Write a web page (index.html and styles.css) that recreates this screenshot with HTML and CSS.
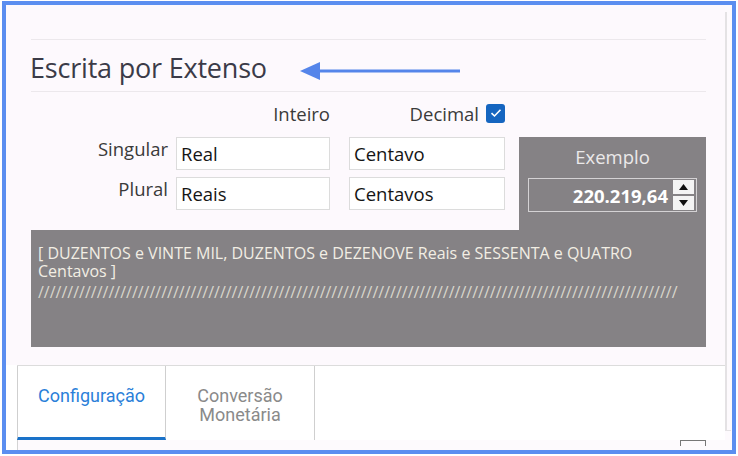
FILE: index.html
```html
<!DOCTYPE html>
<html lang="pt">
<head>
<meta charset="utf-8">
<link rel="stylesheet" href="styles.css">
</head>
<body>
<div class="frame">
  <div class="inner">
    <div class="content">
      <section class="top">
        <div class="rule first"></div>
        <div class="title-row">
          <h1 class="title">Escrita por Extenso</h1>
          <svg class="arrow" width="162" height="20" viewBox="0 0 162 20">
            <line x1="14" y1="10" x2="160" y2="10" stroke="#5585ea" stroke-width="3.2"/>
            <polygon points="0,10 20,1 20,19" fill="#5585ea"/>
          </svg>
        </div>
        <div class="rule"></div>
        <div class="form-grid">
          <div class="head head-int">Inteiro</div>
          <div class="head head-dec">Decimal
            <span class="check">
              <svg width="12" height="10" viewBox="0 0 12 10"><path d="M1.5 5.2 L4.5 8 L10.5 1.8" fill="none" stroke="#fff" stroke-width="1.6"/></svg>
            </span>
          </div>
          <div class="label r1">Singular</div>
          <div class="field r1 c-int">Real</div>
          <div class="field r1 c-dec">Centavo</div>
          <div class="label r2">Plural</div>
          <div class="field r2 c-int">Reais</div>
          <div class="field r2 c-dec">Centavos</div>
          <div class="example">
            <div class="example-title">Exemplo</div>
            <div class="spin">
              <span class="spin-value">220.219,64</span>
              <span class="spin-btns">
                <span class="spin-btn"><svg width="9" height="6" viewBox="0 0 9 6"><polygon points="0,6 4.5,0 9,6" fill="#111"/></svg></span>
                <span class="spin-btn"><svg width="9" height="6" viewBox="0 0 9 6"><polygon points="0,0 9,0 4.5,6" fill="#111"/></svg></span>
              </span>
            </div>
          </div>
        </div>
        <div class="result">
          <p class="result-text">[ DUZENTOS e VINTE MIL, DUZENTOS e DEZENOVE Reais e SESSENTA e QUATRO Centavos ]</p>
          <p class="result-slash">/////////////////////////////////////////////////////////////////////////////////////////////////////////////</p>
        </div>
      </section>
      <section class="tabs-area">
        <div class="tabs">
          <div class="tab active">Configuração</div>
          <div class="tab">Conversão<br>Monetária</div>
        </div>
        <div class="tabs-foot">
          <span class="grip"></span>
        </div>
      </section>
    </div>
    <div class="gutter"></div>
  </div>
</div>
</body>
</html>
```
FILE: styles.css
```css
* { box-sizing: border-box; }
html, body { margin: 0; padding: 0; }
body {
  width: 738px;
  height: 456px;
  background: #ffffff;
  font-family: "Open Sans", "Noto Sans", sans-serif;
  overflow: hidden;
}
.frame {
  margin: 1px 0 0 2px;
  width: 734px;
  height: 453px;
  border: 4px solid #5b8ef0;
  background: #fdfafd;
}
.inner {
  display: flex;
  height: 100%;
}
.content {
  width: 719px;
  display: flex;
  flex-direction: column;
}
.gutter {
  width: 6px;
  margin-top: 7px;
  margin-bottom: 19px;
  border-left: 2px solid #e4e2e4;
  border-bottom: 1px solid #e4e2e4;
}
.top {
  height: 360px;
  padding: 34px 19px 0 25px;
  background: #fdf9fd;
}
.rule {
  height: 1px;
  background: #ece8ec;
}
.title-row {
  height: 51px;
  display: flex;
  align-items: center;
}
.title {
  margin: 3px 0 0 -1px;
  font-weight: 400;
  font-size: 27px;
  color: #3b3b48;
  letter-spacing: -0.2px;
}
.arrow {
  margin-left: 33px;
  margin-top: 10px;
}
.form-grid {
  display: grid;
  grid-template-columns: 137px 8px 154px 19px 156px 14px 187px;
  grid-template-rows: 45px 33px 7px 33px 20px;
  font-size: 18.5px;
}
.head {
  display: flex;
  align-items: center;
  justify-content: flex-end;
  color: #3a3a3a;
  padding-bottom: 3px;
}
.head-int { grid-column: 3; grid-row: 1; }
.head-dec { grid-column: 5; grid-row: 1; gap: 7px; }
.check {
  width: 19px;
  height: 19px;
  border-radius: 3px;
  background: #1565c0;
  display: flex;
  align-items: center;
  justify-content: center;
}
.label {
  grid-column: 1;
  text-align: right;
  color: #3a3a3a;
  padding-top: 0;
  line-height: 24px;
}
.r1 { grid-row: 2; }
.r2 { grid-row: 4; }
.c-int { grid-column: 3; }
.c-dec { grid-column: 5; }
.field {
  background: #ffffff;
  border: 1px solid #dcdcdc;
  padding: 0 4px;
  display: flex;
  align-items: center;
  color: #141414;
}
.example {
  grid-column: 7;
  grid-row: 2 / 6;
  background: #858285;
  padding: 7px 9px 0 9px;
  display: flex;
  flex-direction: column;
}
.example-title {
  text-align: center;
  color: #ebe9ea;
  height: 34px;
  line-height: 26px;
}
.spin {
  height: 34px;
  border: 1px solid #d4d2d4;
  display: flex;
  align-items: center;
  justify-content: flex-end;
  padding-right: 2px;
}
.spin-value {
  color: #ffffff;
  font-weight: 700;
  margin-right: 5px;
}
.spin-btns {
  width: 21px;
  height: 30px;
  display: flex;
  flex-direction: column;
  gap: 2px;
}
.spin-btn {
  flex: 1;
  background: #f4f4f4;
  display: flex;
  align-items: center;
  justify-content: center;
}
.result {
  height: 117px;
  background: #858285;
  padding: 14px 7px 0 7px;
  color: #f2eee4;
  font-size: 16px;
}
.result p {
  margin: 0;
  line-height: 18px;
}
.result-slash {
  color: #d8d6cc;
  white-space: nowrap;
  margin-top: 3px !important;
}
.tabs-area {
  flex: 1;
  display: flex;
  flex-direction: column;
  padding-left: 11px;
  background: #ffffff;
}
.tabs {
  height: 75px;
  display: flex;
  border-top: 1px solid #dcdcdc;
  font-family: Roboto, "Open Sans", sans-serif;
  font-size: 18px;
}
.tab {
  width: 149px;
  display: flex;
  align-items: flex-start;
  justify-content: center;
  text-align: center;
  color: #8a8a8a;
  border-right: 1px solid #cfcfcf;
  line-height: 19px;
  padding-top: 20px;
}
.tab.active {
  color: #2b7fd9;
  background: #ffffff;
  border-left: 1px solid #cfcfcf;
  border-right: 1px solid #cfcfcf;
  border-bottom: 3px solid #1a72c9;
}
.tabs-foot {
  flex: 1;
  background: #fdfafd;
  border-left: 1px solid #d4d4d4;
  display: flex;
  justify-content: flex-end;
  padding-right: 19px;
}
.grip {
  width: 26px;
  height: 6px;
  border: 1px solid #777;
  border-bottom: none;
}
```
